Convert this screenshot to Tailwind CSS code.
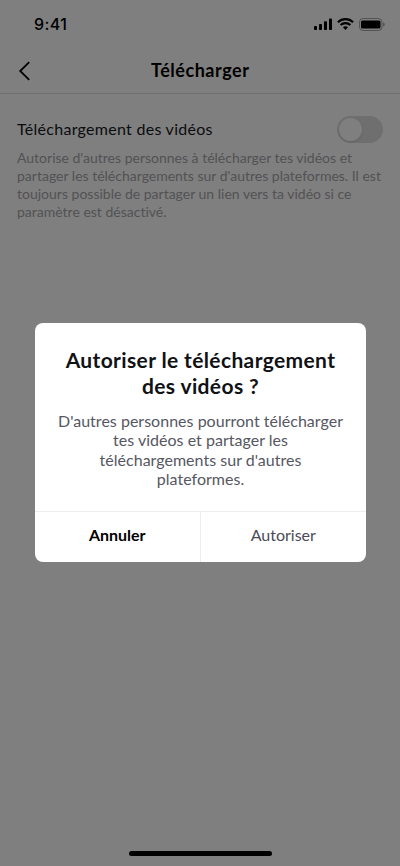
<!DOCTYPE html>
<html lang="fr">
<head>
<meta charset="utf-8">
<meta name="viewport" content="width=device-width, initial-scale=1">
<title>Télécharger</title>
<script src="https://cdn.jsdelivr.net/npm/@tailwindcss/browser@4"></script>
</head>
<body class="relative h-[866px] w-[400px] overflow-hidden bg-white font-['Lato','Open_Sans',sans-serif] text-black antialiased [font-variant-ligatures:none]">
  <div class="flex h-full flex-col">
    <header class="h-[94px] border-b border-[#e2e2e4]">
      <div class="flex h-12 items-center justify-between pr-[15px] pl-[34px]">
        <span class="font-['Inter',sans-serif] text-[16px] leading-5 font-medium tracking-[0.4px]">9:41</span>
        <div class="flex items-center">
          <svg class="h-3 w-[19px]" viewBox="0 0 19 12"><rect x="0" y="8" width="3" height="4" rx=".8"/><rect x="5" y="6" width="3" height="6" rx=".8"/><rect x="10" y="3.3" width="3" height="8.7" rx=".8"/><rect x="15" y="0.5" width="3" height="11.5" rx=".8"/></svg>
          <svg class="ml-1 h-3 w-[17px]" viewBox="0 0 17 12"><g fill="none" stroke="black" stroke-width="2.1"><path d="M.9 4.3C5.1.1 11.9.1 16.1 4.3"/><path d="M3.6 7.1c2.7-2.6 7.1-2.6 9.8 0"/></g><path d="M5.9 9.3c1.5-1.3 3.7-1.3 5.2 0L8.5 12z"/></svg>
          <svg class="ml-[5px] h-[13px] w-[26px]" viewBox="0 0 26 13"><rect x=".5" y=".5" width="22.5" height="12" rx="3.5" fill="none" stroke="#000" stroke-opacity=".35"/><rect x="2" y="2.5" width="19.5" height="8" rx="1.5"/><path d="M24.2 4.4c2 .7 2 3.5 0 4.2z" fill-opacity=".4"/></svg>
        </div>
      </div>
      <div class="flex h-[45px] items-center pl-[18px]">
        <svg class="h-5 w-3" viewBox="0 0 12 20" fill="none" stroke="black" stroke-width="1.8"><path d="M11.2 1.2 2.2 10l9 8.8"/></svg>
        <h1 class="mb-0.5 ml-[121px] text-[18px] leading-6 font-bold tracking-[0.53px] whitespace-nowrap">Télécharger</h1>
      </div>
    </header>
    <main class="px-[17px] pt-[22px]">
      <div class="flex h-[27px] items-center justify-between">
        <h2 class="mb-px text-[16px] leading-5 tracking-[0.28px] whitespace-nowrap text-[#161823]">Téléchargement des vidéos</h2>
        <div class="flex h-[27px] w-[46px] items-center rounded-full bg-[#dedede] pl-0.5"><div class="size-[23px] rounded-full bg-white shadow-sm"></div></div>
      </div>
      <p class="mt-[6px] text-[14px] leading-[18px] whitespace-nowrap text-[#a5a5aa]">
        <span class="block">Autorise d'autres personnes à télécharger tes vidéos et</span>
        <span class="block">partager les téléchargements sur d'autres plateformes. Il est</span>
        <span class="block">toujours possible de partager un lien vers ta vidéo si ce</span>
        <span class="block">paramètre est désactivé.</span>
      </p>
    </main>
    <div class="mx-auto mt-auto mb-[10px] h-[5px] w-[143px] rounded-full bg-black"></div>
  </div>

  <div class="absolute inset-0 bg-black/50 pt-[323px] pl-[35px]">
    <section role="dialog" class="flex h-[239px] w-[331px] flex-col overflow-hidden rounded-[8px] bg-white text-center whitespace-nowrap">
      <h2 class="mt-[24px] text-[21px] leading-[25.5px] font-bold tracking-[0.37px] text-[#111216]">
        <span class="block">Autoriser le téléchargement</span>
        <span class="block">des vidéos ?</span>
      </h2>
      <p class="mt-[13px] text-[16px] leading-[19.3px] tracking-[0.02px] text-[#565762]">
        <span class="block">D'autres personnes pourront télécharger</span>
        <span class="block">tes vidéos et partager les</span>
        <span class="block">téléchargements sur d'autres</span>
        <span class="block">plateformes.</span>
      </p>
      <div class="mt-auto grid h-[51px] grid-cols-2 border-t border-[#ededee] text-[16px]">
        <button class="border-r border-[#ededee] pb-[4px] font-bold">Annuler</button>
        <button class="pb-[4px] text-[#4a4b56]">Autoriser</button>
      </div>
    </section>
  </div>
</body>
</html>
